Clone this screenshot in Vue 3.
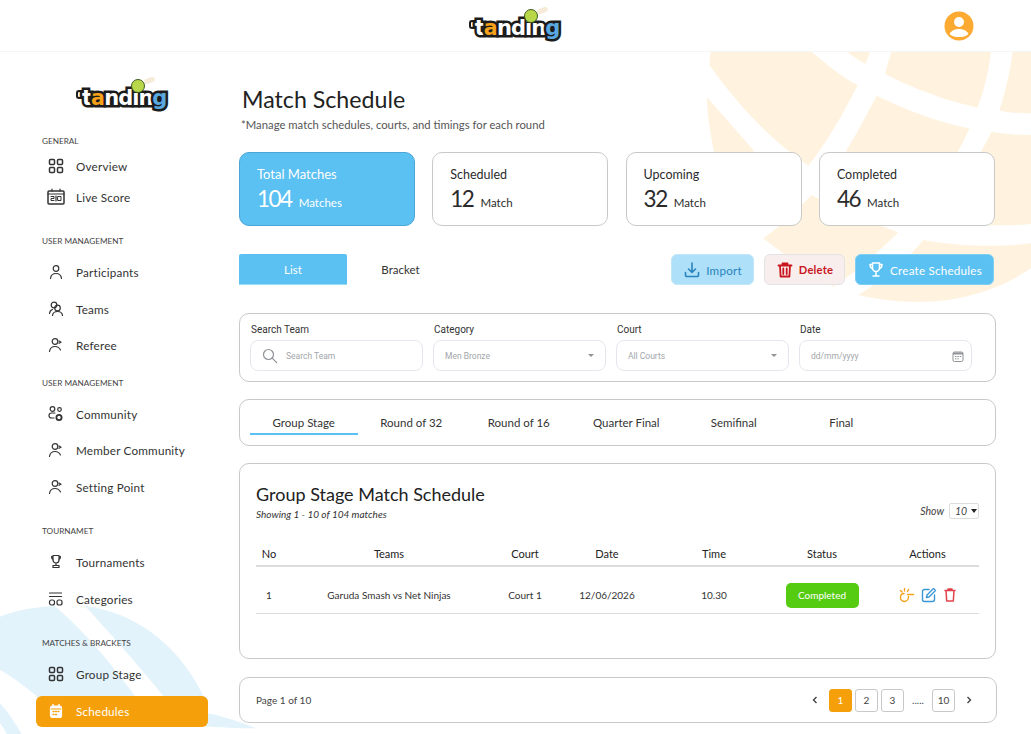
<template>
  <div class="page">

    <!-- background ball shapes -->
    <svg class="bg-ball bg-orange" width="341" height="320" viewBox="0 0 1023 960" fill="#fff3e0">
      <path d="M62 155 L365 155 C420 200 460 235 503 255 C460 340 410 430 355 497 C240 420 140 310 58 195 Z" />
      <path d="M50 290 L190 450 L190 520 L85 520 C65 430 52 350 50 290 Z" />
      <path d="M472 155 L540 155 L527 192 C508 182 490 170 472 155 Z" />
      <path d="M605 155 L903 155 C895 220 880 280 862 323 C760 300 670 265 585 222 C590 200 598 175 605 155 Z" />
      <path d="M968 155 L1023 155 L1023 340 C990 340 960 338 928 332 C945 280 960 215 968 155 Z" />
      <path d="M560 287 C650 330 740 365 838 385 C825 415 810 445 795 470 L795 520 L470 520 L470 450 C500 400 530 345 560 287 Z" />
      <path d="M905 395 C945 402 985 405 1023 405 L1023 672 C985 676 950 676 900 676 L800 600 L860 480 Z" />
      <path d="M365 585 C450 630 540 665 625 697 C560 760 500 815 430 860 C360 820 290 770 220 715 C270 680 320 630 365 585 Z" />
      <path d="M700 720 C780 735 900 745 1023 730 L1023 805 C900 890 720 935 505 885 C580 840 650 780 700 720 Z" />
    </svg>
    <svg class="bg-ball bg-blue" width="280" height="134" viewBox="0 0 840 402" fill="#e3f3fc">
      <path d="M0 50 C50 30 110 20 165 18 C260 100 340 200 405 288 L405 330 L130 330 L110 288 C70 255 35 230 0 210 Z" />
      <path d="M255 18 C390 35 530 120 610 288 L610 330 L490 330 L490 288 C410 190 330 100 255 18 Z" />
      <path d="M600 335 C660 345 720 365 770 385 C720 385 660 382 600 378 Z" />
      <path d="M0 310 C25 335 45 370 65 402 L20 402 C14 390 8 380 0 370 Z" />
    </svg>

    <!-- ========== TOPBAR ========== -->
    <header class="topbar">
      <div class="logo logo-top">
        <span class="logo-bar"></span>
        <span class="logo-word"><span class="lt-t">t</span><span class="lt-a">a</span>ndin<span class="lt-g">g</span></span>
        <span class="logo-ball"></span>
      </div>
      <svg class="avatar" width="30" height="30" viewBox="0 0 30 30">
        <circle cx="15" cy="15" r="14.5" fill="#fcaa32" />
        <circle cx="15" cy="11" r="5" fill="#fff" />
        <path d="M5.5 23 C8 18.8 11.5 18 15 18 C18.5 18 22 18.8 24.5 23 C22 25.5 18.5 26 15 26 C11.5 26 8 25.5 5.5 23 Z" fill="#fff" />
      </svg>
    </header>

    <div class="body">

      <!-- ========== SIDEBAR ========== -->
      <aside class="sidebar">
        <div class="logo logo-side">
          <span class="logo-bar"></span>
          <span class="logo-word"><span class="lt-t">t</span><span class="lt-a">a</span>ndin<span class="lt-g">g</span></span>
          <span class="logo-ball"></span>
        </div>

        <div v-for="group in nav" :key="group.id" class="nav-group" :class="group.id">
          <div class="nav-title">{{ group.title }}</div>
          <div
            v-for="item in group.items"
            :key="item.label"
            class="nav-item"
            :class="{ active: item.active }"
          >
            <svg class="nav-icon" width="20" height="20" viewBox="0 0 20 20" fill="none" stroke="currentColor" stroke-width="1.2" stroke-linecap="round" stroke-linejoin="round" v-html="icons[item.icon]"></svg>
            <span>{{ item.label }}</span>
          </div>
        </div>
      </aside>

      <!-- ========== MAIN ========== -->
      <main class="main">
        <h1 class="page-title">Match Schedule</h1>
        <p class="page-sub">*Manage match schedules, courts, and timings for each round</p>

        <div class="stats">
          <div v-for="s in stats" :key="s.label" class="stat" :class="{ primary: s.primary }">
            <div class="stat-label">{{ s.label }}</div>
            <div class="stat-value"><b>{{ s.value }}</b><span>{{ s.unit }}</span></div>
          </div>
        </div>

        <div class="toolbar">
          <div class="view-tab on">List</div>
          <div class="view-tab">Bracket</div>
          <div class="toolbar-actions">
            <button class="btn btn-import">
              <svg width="18" height="18" viewBox="0 0 18 18" fill="none" stroke="currentColor" stroke-width="1.6" stroke-linecap="round" stroke-linejoin="round"><path d="M9 2v9M5.5 8 9 11.5 12.5 8M2.5 11.5V14a1.5 1.5 0 0 0 1.5 1.5h10a1.5 1.5 0 0 0 1.5-1.5v-2.5" /></svg>
              Import
            </button>
            <button class="btn btn-delete">
              <svg width="18" height="18" viewBox="0 0 18 18" fill="none" stroke="currentColor" stroke-width="1.8" stroke-linecap="round" stroke-linejoin="round"><path d="M2.5 4.5h13M6.5 4.5v-2h5v2M4 4.5l.6 11h8.8l.6-11M7.3 7.5V13M10.7 7.5V13" /></svg>
              Delete
            </button>
            <button class="btn btn-create">
              <svg width="18" height="18" viewBox="0 0 18 18" fill="none" stroke="currentColor" stroke-width="1.5" stroke-linecap="round" stroke-linejoin="round"><path d="M5.5 2h7v5a3.5 3.5 0 0 1-7 0zM5.5 3.5H3c0 2.5 1 3.8 2.8 4.3M12.5 3.5H15c0 2.5-1 3.8-2.8 4.3M9 10.5V14M6 15h6" /></svg>
              Create Schedules
            </button>
          </div>
        </div>

        <div class="panel filters">
          <label class="field">
            <span class="field-label">Search Team</span>
            <span class="input">
              <svg width="16" height="16" viewBox="0 0 16 16" fill="none" stroke="#8f9296" stroke-width="1.2" stroke-linecap="round"><circle cx="6.5" cy="6.5" r="5" /><path d="m10.2 10.2 4.5 4.5" /></svg>
              <span class="ph ph-search">Search Team</span>
            </span>
          </label>
          <label class="field">
            <span class="field-label">Category</span>
            <span class="input"><span class="ph">Men Bronze</span><i class="caret"></i></span>
          </label>
          <label class="field">
            <span class="field-label">Court</span>
            <span class="input"><span class="ph">All Courts</span><i class="caret"></i></span>
          </label>
          <label class="field">
            <span class="field-label">Date</span>
            <span class="input input-date">
              <span class="ph">dd/mm/yyyy</span>
              <svg width="12" height="12" viewBox="0 0 12 12" fill="none" stroke="#8f9296" stroke-width="1"><rect x="1" y="2" width="10" height="9.5" rx="1.5" /><path d="M1 3.5h10" stroke-width="2" /><path d="M3 6.5h1.5M5.3 6.5h1.5M7.6 6.5h1.5M3 8.8h1.5M5.3 8.8h1.5" /></svg>
            </span>
          </label>
        </div>

        <div class="panel stages">
          <div v-for="(st, i) in stages" :key="st" class="stage" :class="{ on: i === 0 }">{{ st }}</div>
        </div>

        <div class="panel table-card">
          <div class="table-head">
            <div>
              <h2 class="table-title">Group Stage Match Schedule</h2>
              <p class="table-sub">Showing 1 - 10 of 104 matches</p>
            </div>
            <div class="show">Show <span class="show-box">10<i></i></span></div>
          </div>
          <table>
            <thead>
              <tr>
                <th class="c-no">No</th><th class="c-teams">Teams</th><th class="c-court">Court</th>
                <th class="c-date">Date</th><th class="c-time">Time</th><th class="c-status">Status</th><th>Actions</th>
              </tr>
            </thead>
            <tbody>
              <tr v-for="row in rows" :key="row.no">
                <td>{{ row.no }}</td>
                <td>{{ row.teams }}</td>
                <td>{{ row.court }}</td>
                <td>{{ row.date }}</td>
                <td>{{ row.time }}</td>
                <td><span class="badge">{{ row.status }}</span></td>
                <td>
                  <span class="acts">
                    <svg width="16" height="16" viewBox="0 0 16 16" fill="none" stroke="#f7a11a" stroke-width="1.4" stroke-linecap="round"><path d="M8.5 7.5h6M9.5 9.5c0 3-2 5-4 5s-4-1.5-4-4 1.5-4 3.5-4" /><path d="M1.5 3.5 3 5M5.5 1.5V4M9.5 2.5 8.5 4.5" /></svg>
                    <svg width="16" height="16" viewBox="0 0 16 16" fill="none" stroke="#3a96d6" stroke-width="1.4" stroke-linecap="round" stroke-linejoin="round"><path d="M8 2.5H3.5a2 2 0 0 0-2 2v8a2 2 0 0 0 2 2h8a2 2 0 0 0 2-2V8" /><path d="M12.5 1.5 14.5 3.5 8 10 5.5 10.5 6 8z" /></svg>
                    <svg width="14" height="16" viewBox="0 0 14 16" fill="none" stroke="#e0424d" stroke-width="1.5" stroke-linecap="round" stroke-linejoin="round"><path d="M2 3.5h10M5 3.5V2h4v1.5M3 3.5l.7 10.5h6.6l.7-10.5" /></svg>
                  </span>
                </td>
              </tr>
            </tbody>
          </table>
        </div>

        <div class="panel pager">
          <span class="pager-info">Page 1 of 10</span>
          <div class="pages">
            <svg width="14" height="14" viewBox="0 0 14 14" fill="none" stroke="#444" stroke-width="1.4"><path d="M8.5 4 5.5 7l3 3" /></svg>
            <span class="pg on">1</span><span class="pg">2</span><span class="pg">3</span>
            <span class="dots">.....</span>
            <span class="pg">10</span>
            <svg width="14" height="14" viewBox="0 0 14 14" fill="none" stroke="#444" stroke-width="1.4"><path d="M5.5 4l3 3-3 3" /></svg>
          </div>
        </div>
      </main>
    </div>
  </div>
</template>

<script setup>
const icons = {
  grid: '<rect x="3.5" y="3.5" width="5" height="5" rx="1" stroke-width="1.5"/><rect x="11.5" y="3.5" width="5" height="5" rx="1" stroke-width="1.5"/><rect x="3.5" y="11.5" width="5" height="5" rx="1" stroke-width="1.5"/><rect x="11.5" y="11.5" width="5" height="5" rx="1" stroke-width="1.5"/>',
  score: '<rect x="2" y="4" width="16" height="13" rx="1" stroke-width="1.5"/><path d="M6 2v2M14 2v2M2 7h16M10 9v5"/><path d="M5 9.5h3v2H5v2h3M12 9.5h3v4h-3z" stroke-width="1"/>',
  user: '<circle cx="10" cy="6.5" r="2.8"/><path d="M4.5 16.5c.4-3.3 2.3-5 5.5-5s5.1 1.7 5.5 5"/>',
  team: '<circle cx="8" cy="6" r="2.8"/><circle cx="11.5" cy="9" r="2.8"/><path d="M3.5 14.5c.3-2.2 1.4-3.5 3-4M6.5 16.5c.3-2.6 2.2-4 5-4s4.7 1.4 5 4"/>',
  referee: '<circle cx="9" cy="6.5" r="2.8"/><path d="M3.5 16.5c.5-3.3 2.5-5 5.5-5s4.5 1.3 5.5 3.5M13 6l2 1.3-2 1"/>',
  community: '<circle cx="6.5" cy="5" r="2.3"/><circle cx="13.5" cy="5.5" r="1.8"/><path d="M8 14H5.5a2.5 2.5 0 0 1 0-5H9"/><circle cx="13" cy="13.5" r="2.6" stroke-width="1.8"/>',
  trophy: '<path d="M7 3.5h6V8a3 3 0 0 1-6 0zM7 4.5H5.5c0 1.8.5 2.8 1.8 3.3M13 4.5h1.5c0 1.8-.5 2.8-1.8 3.3M10 11v2.5M7 15.5h6v-2H7z"/>',
  categories: '<path d="M3.5 4h12M3.5 7.5h12"/><rect x="3.5" y="11" width="5" height="5" rx="2"/><rect x="11" y="11" width="5" height="5" rx="2"/>',
  calendar: '<path d="M7 3.5V6M13 3.5V6" stroke-width="1.5"/><rect x="4.5" y="5" width="11" height="11.5" rx="2" fill="#fff" stroke="#fff"/><path d="M5 8h10" stroke="#f59f0b" stroke-width="1"/><path d="M7 10.5h1M9.5 10.5h1M12 10.5h1M7 13.5h1M9.5 13.5h1" stroke="#f59f0b" stroke-width="1.3"/>',
}

const nav = [
  { id: 'g-general', title: 'GENERAL', items: [
    { label: 'Overview', icon: 'grid' },
    { label: 'Live Score', icon: 'score' },
  ] },
  { id: 'g-users', title: 'USER MANAGEMENT', items: [
    { label: 'Participants', icon: 'user' },
    { label: 'Teams', icon: 'team' },
    { label: 'Referee', icon: 'referee' },
  ] },
  { id: 'g-community', title: 'USER MANAGEMENT', items: [
    { label: 'Community', icon: 'community' },
    { label: 'Member Community', icon: 'referee' },
    { label: 'Setting Point', icon: 'referee' },
  ] },
  { id: 'g-tour', title: 'TOURNAMET', items: [
    { label: 'Tournaments', icon: 'trophy' },
    { label: 'Categories', icon: 'categories' },
  ] },
  { id: 'g-match', title: 'MATCHES & BRACKETS', items: [
    { label: 'Group Stage', icon: 'grid' },
    { label: 'Schedules', icon: 'calendar', active: true },
  ] },
]

const stats = [
  { label: 'Total Matches', value: '104', unit: 'Matches', primary: true },
  { label: 'Scheduled', value: '12', unit: 'Match' },
  { label: 'Upcoming', value: '32', unit: 'Match' },
  { label: 'Completed', value: '46', unit: 'Match' },
]

const stages = ['Group Stage', 'Round of 32', 'Round of 16', 'Quarter Final', 'Semifinal', 'Final']

const rows = [
  { no: 1, teams: 'Garuda Smash vs Net Ninjas', court: 'Court 1', date: '12/06/2026', time: '10.30', status: 'Completed' },
]
</script>

<style>
html, body { margin: 0; background: #fff; }
</style>

<style scoped>
* { box-sizing: border-box; }

.page {
  position: relative;
  width: 1031px;
  height: 734px;
  overflow: hidden;
  background: #fff;
  font-family: 'Lato', 'Noto Sans', Arial, sans-serif;
  color: #2b2b2b;
}

.bg-ball { position: absolute; }
.bg-orange { top: 0; right: 0; }
.bg-blue { left: 0; bottom: 0; }

/* ─── Topbar ───────────────────────────── */
.topbar {
  position: relative;
  height: 52px;
  display: flex;
  align-items: center;
  justify-content: center;
  border-bottom: 1px solid #f5f5f5;
  background: #fff;
}

.avatar { position: absolute; right: 57px; top: 11px; }

/* ─── Logo ─────────────────────────────── */
.logo { position: relative; display: inline-block; }

.logo-word {
  position: relative;
  display: block;
  font-family: 'DejaVu Sans', sans-serif;
  font-weight: 700;
  font-size: 21px;
  line-height: 26px;
  letter-spacing: -1px;
  color: #fff;
  -webkit-text-stroke: 5px #1c1c1c;
  paint-order: stroke fill;
}

.lt-a { color: #f7a11a; }
.lt-g { color: #5aa8e0; }

/* crossbar of the t, sits behind the word and runs out to the left */
.logo-bar {
  position: absolute;
  left: -6px;
  top: 5px;
  width: 12px;
  height: 9px;
  border-radius: 3px 0 0 3px;
  background: #fff;
  border: 2px solid #1c1c1c;
  border-right: 0;
}

.logo-ball {
  position: absolute;
  top: -6px;
  right: 21px;
  width: 14px;
  height: 14px;
  border-radius: 50%;
  background: #b8d84a;
  border: 1px solid #3c5a20;
}

.logo-ball::after {
  content: '';
  position: absolute;
  left: 12px;
  top: -2px;
  width: 11px;
  height: 5px;
  background: #f6ead8;
  border-radius: 3px;
  transform: rotate(-20deg);
}

.logo-top { margin-top: 4px; margin-left: 3px; }

/* ─── Sidebar ──────────────────────────── */
.body { display: flex; position: relative; }

.sidebar {
  width: 239px;
  flex-shrink: 0;
  padding: 0 31px 0 36px;
}

.logo-side { margin: 33px 0 0 46px; }

.nav-group { padding-left: 6px; }
.g-general { margin-top: 23px; }
.g-users { margin-top: 22px; }
.g-community { margin-top: 12px; }
.g-tour { margin-top: 19px; }
.g-match { margin-top: 19px; }

.nav-title {
  font-size: 8.2px;
  line-height: 14px;
  color: #444;
}

.nav-item {
  display: flex;
  align-items: center;
  gap: 10px;
  height: 31px;
  margin: 0 0 0 -6px;
  padding-left: 10px;
  font-size: 11.7px;
  color: #333;
  letter-spacing: 0.2px;
}

.g-users .nav-item, .g-community .nav-item, .g-tour .nav-item { height: 36.5px; }
.g-general .nav-title { margin-bottom: 2px; }
.g-users .nav-title { margin-bottom: 6px; }
.g-community .nav-title { margin-bottom: 6px; }
.g-tour .nav-title { margin-bottom: 6px; }
.g-match .nav-title { margin-bottom: 8px; }
.g-match .nav-item { height: 31px; margin-top: 6px; }
.g-match .nav-item.active { margin-top: 6.5px; }

.nav-item.active {
  background: #f59f0b;
  color: #fff;
  border-radius: 6px;
  width: 172px;
}

.nav-icon { flex-shrink: 0; }

/* ─── Main ─────────────────────────────── */
.main {
  flex: 1;
  min-width: 0;
  padding: 33px 35px 0 0;
  position: relative;
}

.page-title {
  margin: 0 0 0 3px;
  font-size: 23.2px;
  line-height: 28px;
  font-weight: 400;
  color: #222;
}

.page-sub {
  margin: 5px 0 0 2px;
  font-size: 11.3px;
  line-height: 14px;
  color: #555;
}

/* Stats */
.stats {
  display: grid;
  grid-template-columns: repeat(4, 176px);
  column-gap: 17.3px;
  margin-top: 20px;
}

.stat {
  height: 74px;
  background: #fff;
  border: 1px solid #c9c9c9;
  border-radius: 10px;
  padding: 13px 17px 0;
}

.stat.primary {
  background: #5bc0f2;
  border-color: #4ba6d6;
  color: #fff;
}

.stat-label { font-size: 12.5px; line-height: 17px; }
.stat.primary .stat-label { font-size: 13px; }

.stat-value {
  display: flex;
  align-items: baseline;
  gap: 7px;
  margin-top: 2px;
}

.stat-value b { font-size: 22.5px; line-height: 28px; font-weight: 400; letter-spacing: -1.5px; }
.stat-value span { font-size: 11.5px; }

/* Toolbar */
.toolbar {
  display: flex;
  align-items: center;
  margin-top: 28px;
  height: 31px;
}

.view-tab {
  width: 107px;
  height: 31px;
  line-height: 31px;
  text-align: center;
  font-size: 11.5px;
  color: #333;
}

.view-tab.on {
  width: 108px;
  background: #5bc0f2;
  color: #fff;
  border-radius: 2px 2px 0 0;
  border-bottom: 1px solid #9ed9f6;
}

.toolbar-actions { margin-left: auto; display: flex; gap: 10px; margin-right: 2px; }

.btn {
  display: flex;
  align-items: center;
  justify-content: center;
  gap: 5px;
  height: 31px;
  border: 1px solid #e3e3e3;
  border-radius: 6px;
  font: inherit;
  font-size: 11.7px;
  letter-spacing: 0.2px;
  padding: 0;
}

.btn-import { width: 83px; background: #aee0f9; color: #2a83bd; border-color: #c2e6f8; }
.btn-delete { width: 81px; background: #f9eeee; color: #c8161d; font-size: 11.2px; font-weight: 700; }
.btn-create { width: 139px; background: #5bc0f2; color: #fff; border-color: #7fcff5; }

/* Panels */
.panel {
  background: #fff;
  border: 1px solid #c9c9c9;
  border-radius: 10px;
}

.filters {
  display: grid;
  grid-template-columns: repeat(4, 173px);
  gap: 10px;
  height: 69px;
  margin-top: 28px;
  padding: 9px 0 0 10px;
}

.field { display: block; }

.field-label {
  display: block;
  padding-left: 1px;
  font-family: 'Roboto', sans-serif;
  font-size: 10px;
  line-height: 14px;
  color: #333;
}

.input {
  display: flex;
  align-items: center;
  height: 31px;
  margin-top: 3px;
  padding: 0 11px;
  border: 1px solid #e4e8ee;
  border-radius: 8px;
  background: #fff;
}

.input-date { padding-right: 7px; }

.ph {
  font-family: 'Roboto', sans-serif;
  font-size: 8.5px;
  color: #a3a6ab;
  flex: 1;
}

.ph-search { margin-left: 8px; }

.caret {
  width: 0;
  height: 0;
  border: 3px solid transparent;
  border-top: 3px solid #8f9296;
  border-bottom: 0;
}

.stages {
  display: flex;
  height: 47px;
  margin-top: 17px;
  padding: 0 0 0 10px;
  align-items: stretch;
}

.stage {
  width: 107.5px;
  font-size: 11.5px;
  line-height: 45px;
  text-align: center;
  color: #333;
}

.stage.on { height: 35px; border-bottom: 2px solid #5bc0f2; line-height: 45px; }

.table-card {
  height: 196px;
  margin-top: 17px;
  padding: 19px 16px 0;
}

.table-head { display: flex; justify-content: space-between; align-items: flex-start; }

.table-title {
  margin: 0;
  font-size: 18px;
  line-height: 22px;
  font-weight: 400;
  color: #222;
}

.table-sub {
  margin: 3px 0 0;
  font-size: 10px;
  line-height: 13px;
  font-style: italic;
  color: #333;
}

.show {
  display: flex;
  align-items: center;
  gap: 5px;
  margin-top: 20px;
  font-size: 10.5px;
  font-style: italic;
  color: #444;
}

.show-box {
  display: flex;
  align-items: center;
  gap: 4px;
  width: 30px;
  height: 16px;
  padding-left: 5px;
  border: 1px solid #dcdcdc;
  border-radius: 2px;
}

.show-box i {
  width: 0;
  height: 0;
  border: 3.5px solid transparent;
  border-top: 4px solid #222;
  border-bottom: 0;
}

table {
  width: 100%;
  margin-top: 20px;
  border-collapse: collapse;
  table-layout: fixed;
}

th {
  height: 25px;
  padding: 0;
  font-size: 11px;
  font-weight: 400;
  text-align: center;
  color: #222;
  border-bottom: 2px solid #dcdcdc;
}

td {
  height: 47px;
  padding: 11px 0 0;
  font-size: 10px;
  text-align: center;
  color: #333;
  border-bottom: 1px solid #dcdcdc;
}

.c-no { width: 26px; }
.c-teams { width: 214px; }
.c-court { width: 58px; }
.c-date { width: 106px; }
.c-time { width: 108px; }
.c-status { width: 108px; }

.badge {
  display: inline-block;
  width: 73px;
  height: 25px;
  line-height: 25px;
  border-radius: 5px;
  background: #55cc12;
  color: #fff;
  font-size: 10px;
}

.acts { display: inline-flex; align-items: center; gap: 6px; vertical-align: middle; }

.pager {
  display: flex;
  align-items: center;
  justify-content: space-between;
  height: 46px;
  margin-top: 18px;
  margin-right: -1px;
  padding: 0 20px 0 16px;
}

.pager-info { font-size: 10px; color: #444; }

.pages { display: flex; align-items: center; gap: 3px; }

.pg {
  width: 23px;
  height: 23px;
  line-height: 21px;
  text-align: center;
  font-size: 10px;
  color: #444;
  border: 1px solid #c9c9c9;
  border-radius: 3px;
}

.pg:first-of-type { margin-left: 4px; }

.pg.on { background: #f59f0b; border-color: #f59f0b; color: #fff; }

.dots { width: 22px; text-align: center; font-size: 10px; color: #444; }

.pages svg:last-child { margin-left: 4px; }
</style>
